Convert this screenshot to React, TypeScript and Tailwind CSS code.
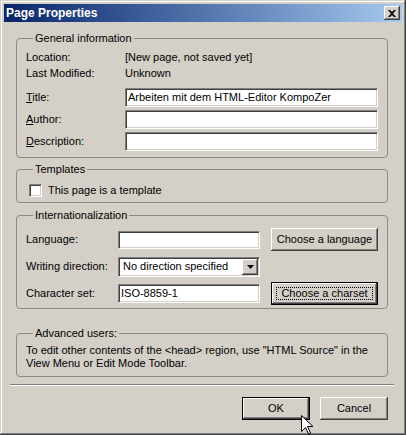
import React from 'react';

// Win2000 style bevels
const raised =
  'bg-[#d4d0c8] shadow-[inset_-1px_-1px_0_#404040,inset_1px_1px_0_#ffffff,inset_-2px_-2px_0_#808080,inset_2px_2px_0_#d4d0c8]';
const sunken =
  'bg-white border border-t-[#808080] border-l-[#808080] border-b-white border-r-white shadow-[inset_1px_1px_0_#404040,inset_-1px_-1px_0_#d4d0c8]';
const group = 'border border-[#8a8a8a] rounded-[4px] px-[9px]';
const legend = 'ml-[7px] px-[2px] leading-[14px]';

function Field({ accel, rest, value }: { accel: string; rest: string; value?: string }) {
  return (
    <div className="flex items-center h-[19px]">
      <span className="w-[99px] shrink-0">
        <span className="underline">{accel}</span>
        {rest}
      </span>
      <div className={`${sunken} h-[19px] flex-1 flex items-center pl-[2px] whitespace-nowrap overflow-hidden`}>
        {value}
      </div>
    </div>
  );
}

function Button({ children, wide, isDefault, focus }: { children: React.ReactNode; wide?: boolean; isDefault?: boolean; focus?: boolean }) {
  return (
    <div
      className={`relative h-[23px] flex items-center justify-center ${wide ? 'w-[107px]' : 'w-[68px]'} ${
        isDefault ? 'border border-black' : ''
      } ${raised}`}
    >
      {focus && <span className="absolute inset-[4px] border border-dotted border-black" />}
      {children}
    </div>
  );
}

export default function App() {
  return (
    <div className="relative w-[406px] h-[435px] bg-[#d4d0c8] p-[4px] flex flex-col text-[11px] text-black font-['Liberation_Sans',Arial,sans-serif] shadow-[inset_-1px_-1px_0_#404040,inset_1px_1px_0_#d4d0c8,inset_-2px_-2px_0_#808080,inset_2px_2px_0_#ffffff]">
      {/* Title bar */}
      <div className="h-[18px] flex items-center justify-between px-[2px] bg-linear-to-r from-[#0a246a] to-[#a6caf0]">
        <span className="text-white font-bold text-[12px] leading-none">Page Properties</span>
        <div className={`w-[16px] h-[14px] flex items-center justify-center ${raised}`}>
          <svg width="8" height="7" viewBox="0 0 8 7">
            <path d="M0 0h2l2 2 2-2h2L5 3.5 8 7H6L4 5 2 7H0l3-3.5z" fill="#000" />
          </svg>
        </div>
      </div>

      <div className="flex flex-col pl-[12px] pr-[14px]">
        {/* General information */}
        <fieldset className={`${group} mt-[9px] pb-[6px]`}>
          <legend className={legend}>General information</legend>
          <div className="flex leading-[16px] mt-[4px]">
            <span className="w-[99px]">Location:</span>
            <span>[New page, not saved yet]</span>
          </div>
          <div className="flex leading-[16px]">
            <span className="w-[99px]">Last Modified:</span>
            <span>Unknown</span>
          </div>
          <div className="flex flex-col gap-[3px] mt-[7px]">
            <Field accel="T" rest="itle:" value="Arbeiten mit dem HTML-Editor KompoZer" />
            <Field accel="A" rest="uthor:" />
            <Field accel="D" rest="escription:" />
          </div>
        </fieldset>

        {/* Templates */}
        <fieldset className={`${group} mt-[4px] pb-[4px]`}>
          <legend className={legend}>Templates</legend>
          <div className="flex items-center h-[16px] mt-[6px] ml-[3px] gap-[6px]">
            <span className="w-[13px] h-[13px] block bg-white border border-t-[#808080] border-l-[#808080] border-b-white border-r-white shadow-[inset_1px_1px_0_#404040,inset_-1px_-1px_0_#d4d0c8]" />
            <span>This page is a template</span>
          </div>
        </fieldset>

        {/* Internationalization */}
        <fieldset className={`${group} mt-[5px] pb-[3px]`}>
          <legend className={legend}>Internationalization</legend>
          <div className="flex flex-col gap-[4px] mt-[6px]">
            <div className="flex items-center h-[23px]">
              <span className="w-[92px]">Language:</span>
              <div className={`${sunken} w-[142px] h-[18px]`} />
              <div className="ml-[11px]">
                <Button wide>Choose a language</Button>
              </div>
            </div>
            <div className="flex items-center h-[23px]">
              <span className="w-[92px]">Writing direction:</span>
              <div className={`${sunken} w-[142px] h-[20px] flex items-center justify-between pl-[4px] pr-[1px]`}>
                <span>No direction specified</span>
                <div className={`w-[16px] h-[16px] flex items-center justify-center ${raised}`}>
                  <svg width="7" height="4" viewBox="0 0 7 4">
                    <path d="M0 0h7L3.5 4z" fill="#000" />
                  </svg>
                </div>
              </div>
            </div>
            <div className="flex items-center h-[23px]">
              <span className="w-[92px]">Character set:</span>
              <div className={`${sunken} w-[142px] h-[19px] flex items-center pl-[2px]`}>ISO-8859-1</div>
              <div className="ml-[11px]">
                <Button wide isDefault focus>
                  Choose a charset
                </Button>
              </div>
            </div>
          </div>
        </fieldset>

        {/* Advanced users */}
        <fieldset className={`${group} mt-[17px] pb-[6px]`}>
          <legend className={legend}>Advanced users:</legend>
          <p className="leading-[13px] mt-[4px]">
            To edit other contents of the &lt;head&gt; region, use "HTML Source" in the
            <br />
            View Menu or Edit Mode Toolbar.
          </p>
        </fieldset>

        <div className="mt-[7px] -mx-[6px] h-[2px] border-t border-t-[#808080] border-b border-b-white" />

        <div className="flex justify-end gap-[10px] mt-[11px]">
          <Button isDefault>OK</Button>
          <Button>Cancel</Button>
        </div>
      </div>

      {/* mouse pointer */}
      <svg className="absolute left-[301px] top-[415px]" width="12" height="20" viewBox="0 0 12 20">
        <path d="M0.5 0.5v16l4-4 3 6.5 2-1-3-6.5h5.5z" fill="#fff" stroke="#000" strokeWidth="1" />
      </svg>
    </div>
  );
}
